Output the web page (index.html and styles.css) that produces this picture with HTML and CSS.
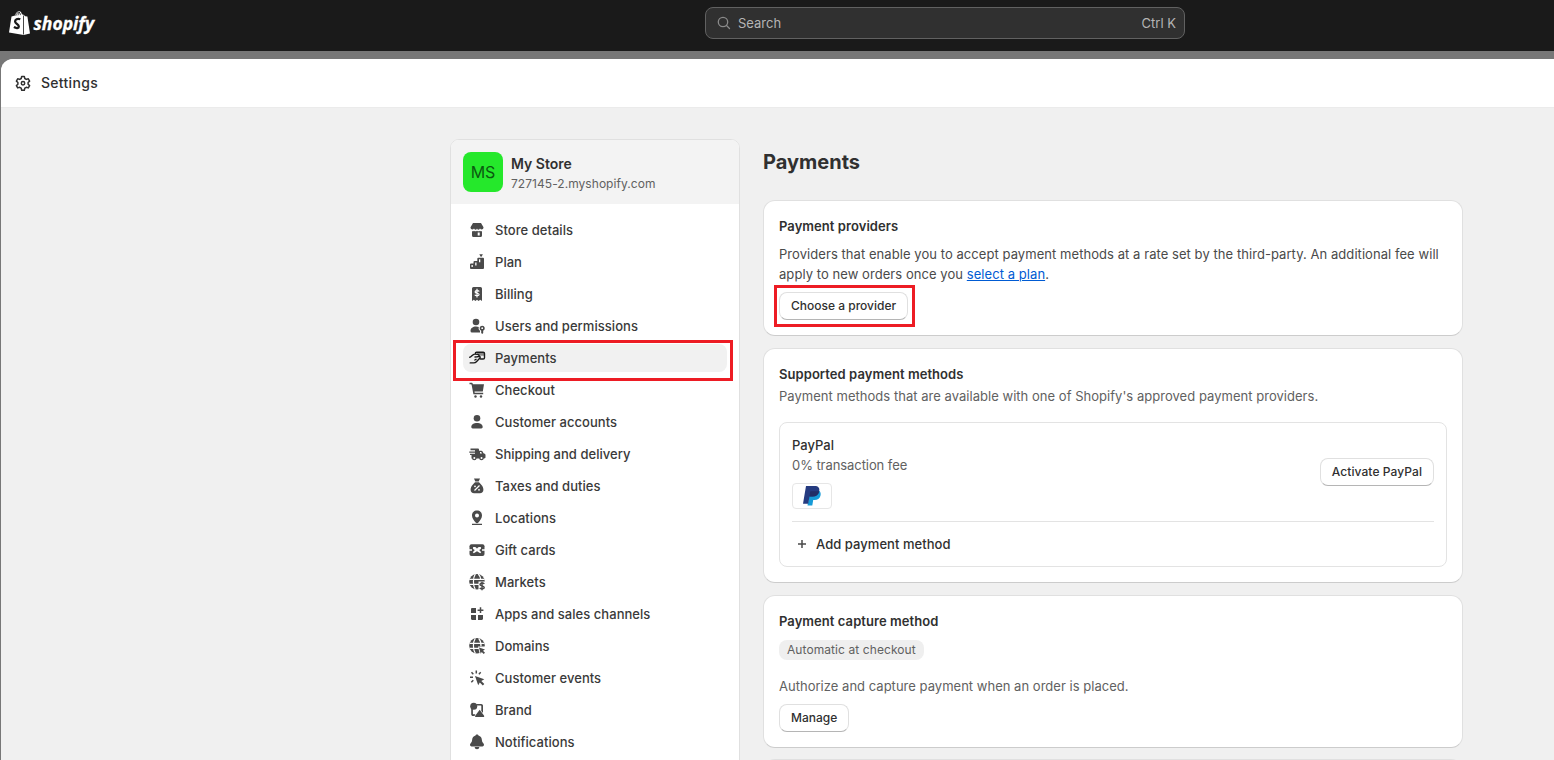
FILE: index.html
```html
<!DOCTYPE html>
<html lang="en">
<head>
    <meta charset="UTF-8">
    <meta name="viewport" content="width=device-width, initial-scale=1.0">
    <title>Settings - Payments</title>
    <link rel="stylesheet" href="styles.css">
</head>
<body>
    <header class="topbar">
        <svg class="logo" width="100" height="34" viewBox="0 0 100 34">
            <path d="M3.500 7.600 7 6.500C7.700 4 9.300 2.300 11.200 2.300c1.500 0 2.300 1.200 2.700 3l1.600.4 1.800 1.600 2.100.3L22 24.600l-6.300 1.300L1 23.500z" fill="#fff"/>
            <path d="M7.800 6.800c.4-2 1.700-3.500 3.100-3.500.9 0 1.400 1.300 1.500 2.800M10 6.300c.3-1.500 1-2.600 2-3" fill="none" stroke="#1a1a1a" stroke-width=".8"/>
            <path d="M12.300 10.300C9.500 9 6.900 10.500 7.100 12.700c.2 2.200 3.700 2.500 3.700 4.700 0 2-2.500 2.200-4.900.7" fill="none" stroke="#1a1a1a" stroke-width="2.300"/>
            <path d="M15.500 6.500v19" stroke="#1a1a1a" stroke-width=".8"/>
            <text class="wordmark" x="25.500" y="20.500" textLength="60.500" lengthAdjust="spacingAndGlyphs">shopify</text>
        </svg>
        <div class="search">
            <svg width="14" height="14" viewBox="0 0 14 14" fill="none" stroke="#8a8a8a" stroke-width="1.300" stroke-linecap="round">
                <circle cx="6" cy="6" r="4.700"/><path d="m9.500 9.500 3 3"/>
            </svg>
            <span>Search</span>
            <span class="shortcut">Ctrl K</span>
        </div>
    </header>

    <div class="backdrop">
        <div class="modal">
            <div class="modal-header">
                <svg width="20" height="20" viewBox="0 0 20 20" fill="none" stroke="#303030" stroke-width="1.500" stroke-linejoin="round">
                    <path d="M8.700 3.500h2.600l.5 2 1.500.9 2-.6 1.300 2.300-1.500 1.400v1.700l1.500 1.400-1.300 2.300-2-.6-1.500.9-.5 2H8.700l-.5-2-1.500-.9-2 .6-1.300-2.300 1.500-1.400V9.500L3.400 8.100l1.300-2.300 2 .6 1.500-.9z"/>
                    <circle cx="10" cy="10.300" r="1.700"/>
                </svg>
                <span>Settings</span>
            </div>

            <div class="content">
                <aside class="sidebar">
                    <div class="store">
                        <div class="avatar">MS</div>
                        <div>
                            <div class="store-name">My Store</div>
                            <div class="store-url">727145-2.myshopify.com</div>
                        </div>
                    </div>
                    <nav class="nav">
                        <a class="nav-item">
                            <svg class="icon" viewBox="0 0 20 20">
                                <path d="M6 3h8l2.500 4.200c0 2.300-2.400 3-3.500 1.300-1 1.700-2.400 1.700-3 0-.6 1.700-2 1.700-3 0C5.900 10.200 3.500 9.500 3.500 7.200z"/>
                                <path d="M5 11.200c1 .2 1.500 0 2-.5 1 .8 2 .8 3 0 1 .8 2 .8 3 0 .5.500 1 .7 2 .5V15.500a1.500 1.500 0 0 1-1.500 1.500h-7A1.500 1.500 0 0 1 5 15.500z"/>
                                <path class="cut" d="M10.700 12.500h2v3h-2z"/>
                            </svg>
                            <span>Store details</span>
                        </a>
                        <a class="nav-item">
                            <svg class="icon" viewBox="0 0 20 20">
                                <path d="M3 12.500a1 1 0 0 1 1-1h2.500V10a1 1 0 0 1 1-1h2.800V6.700a1 1 0 0 1 1-1H16a1 1 0 0 1 1 1V16a1 1 0 0 1-1 1H4a1 1 0 0 1-1-1zM12.300 2.200h3.600L14.500 4.700h-.8z"/>
                                <path class="cut" d="M4.500 13h1.300v2H4.500zM8.200 10.500h1.300v3H8.200zM12 7.300h1.300v3H12z"/>
                            </svg>
                            <span>Plan</span>
                        </a>
                        <a class="nav-item">
                            <svg class="icon" viewBox="0 0 20 20">
                                <path d="M5 4.500A1.500 1.500 0 0 1 6.500 3h7A1.500 1.500 0 0 1 15 4.500V17l-1.800-1.200-1.600 1.200L10 15.800 8.400 17l-1.600-1.200L5 17z"/>
                                <path class="cut-line" d="M12.200 7.500c-.7-1.400-4.100-1.200-4.100.5 0 1.700 4 .8 4 2.500 0 1.500-3.600 1.600-4.300.2M10 4.700v8.700"/>
                            </svg>
                            <span>Billing</span>
                        </a>
                        <a class="nav-item">
                            <svg class="icon" viewBox="0 0 20 20">
                                <circle cx="9" cy="6" r="3.300"/>
                                <path d="M3.500 15c0-3 2.500-4.500 5.500-4.500 1.200 0 2 .2 2.800.6-.5 1.700 0 3 1.200 3.700v1.700H5A1.500 1.500 0 0 1 3.500 15z"/>
                                <path fill-rule="evenodd" d="M15.200 9.700a2.600 2.600 0 0 1 1 5V17l-1 1-1-1v-2.300a2.600 2.600 0 0 1 1-5zm0 1.600a.9.9 0 1 0 0 1.800.9.9 0 0 0 0-1.800z"/>
                            </svg>
                            <span>Users and permissions</span>
                        </a>
                        <a class="nav-item active">
                            <svg class="icon" viewBox="0 0 20 20">
                                <path d="M8.500 4.500h8.700v3.200H13z"/>
                                <path class="line" d="M8.300 5.500c0-.8.500-1.300 1.300-1.300h6.600c.8 0 1.300.5 1.300 1.300v4.200c0 .8-.5 1.300-1.300 1.300h-2.700M2.700 9.300c1.700 0 2.800-3.200 5-3.200 1.800 0 4.500.2 4.500 1.300 0 1-1.500 1.500-4.200 1.600M12 8.200c1.300.3 1.600 1.200.7 2.100l-3.300 3.500c-.8.900-1.500 1.100-2.700 1.100H3.200M9 11.300l-1.200.7"/>
                            </svg>
                            <span>Payments</span>
                        </a>
                        <a class="nav-item">
                            <svg class="icon" viewBox="0 0 20 20">
                                <path d="M2.500 2.800h1.700c.9 0 1.500.5 1.700 1.400H17l-1.200 7.300H7.500l.2 1.300h8.500v1.400H6.400L4.600 4.700c0-.3-.3-.5-.6-.5H2.500z"/>
                                <circle cx="8.500" cy="16.500" r="1.200"/><circle cx="14" cy="16.500" r="1.200"/>
                            </svg>
                            <span>Checkout</span>
                        </a>
                        <a class="nav-item">
                            <svg class="icon" viewBox="0 0 20 20">
                                <circle cx="10" cy="6.300" r="3.300"/>
                                <path d="M4.300 15c0-2.800 2.700-4 5.700-4s5.700 1.200 5.700 4c0 .8-.6 1.400-1.400 1.400H5.700c-.8 0-1.400-.6-1.400-1.400z"/>
                            </svg>
                            <span>Customer accounts</span>
                        </a>
                        <a class="nav-item">
                            <svg class="icon" viewBox="0 0 20 20">
                                <path d="M3.500 4.500H11a1 1 0 0 1 1 1v1.200h2.300c.6 0 1 .3 1.300.8l.9 1.700 1.200.6c.5.200.8.7.8 1.200v2.200c0 .7-.5 1.200-1.300 1.200H4.500V11H3V9.800h5V8.700H2.300V7.400H8V6.200H3.500z"/>
                                <circle cx="7.300" cy="14" r="2.300"/><circle cx="14.500" cy="14" r="2.300"/>
                                <circle class="cut" cx="7.300" cy="14" r="1"/><circle class="cut" cx="14.500" cy="14" r="1"/>
                                <path class="cut" d="M13 8h1.200l.8 1.600h-2z"/>
                            </svg>
                            <span>Shipping and delivery</span>
                        </a>
                        <a class="nav-item">
                            <svg class="icon" viewBox="0 0 20 20">
                                <path d="M7 2.500h6l-1.300 3H8.300zM8 6.300h4c.7 1 1.600 1.600 2.500 2.700 1.200 1.400 1.900 3 1.900 4.700 0 2.200-1.400 3.500-3.500 3.500H7.100c-2.100 0-3.500-1.300-3.500-3.500 0-1.700.7-3.300 1.900-4.700C6.400 7.900 7.300 7.300 8 6.300z"/>
                                <path class="cut-line" d="m7.500 14.500 5-5"/>
                                <circle class="cut" cx="8" cy="10.300" r=".9"/><circle class="cut" cx="12" cy="13.800" r=".9"/>
                            </svg>
                            <span>Taxes and duties</span>
                        </a>
                        <a class="nav-item">
                            <svg class="icon" viewBox="0 0 20 20">
                                <path fill-rule="evenodd" d="M10 2.500c3 0 5 2.100 5 4.900 0 2.900-2 4.600-3.600 7.200-.6 1-2.200 1-2.800 0C7 12 5 10.300 5 7.400c0-2.800 2-4.900 5-4.900zm0 3a2 2 0 1 0 0 4 2 2 0 0 0 0-4zM5 15.700h10V17H5z"/>
                            </svg>
                            <span>Locations</span>
                        </a>
                        <a class="nav-item">
                            <svg class="icon" viewBox="0 0 20 20">
                                <rect x="2.500" y="4.300" width="15" height="11.700" rx="2"/>
                                <path class="cut" d="M2 9.300h3v1.500H2zM15 9.300h3v1.500h-3zM6 7.200c2-.5 3.300 0 4 1.500.7-1.500 2-2 4-1.500.3 1.300-.3 2.300-1.800 2.800l2 2.300-1 1L10 11.300l-3.200 2-1-1 2-2.300C6.300 9.500 5.700 8.500 6 7.200z"/>
                            </svg>
                            <span>Gift cards</span>
                        </a>
                        <a class="nav-item">
                            <svg class="icon" viewBox="0 0 20 20">
                                <circle cx="10" cy="9.800" r="7.800"/>
                                <path class="cut-line" d="M2.200 7.300h15.500M2.200 12.300h10M8.300 2c-2.500 4-2.500 11.500 0 15.500M11.300 2c1.700 1.800 2.300 3.500 2.500 5.500"/>
                                <path class="cut" d="M11.500 9.500H18.500V19h-7z"/>
                                <path class="glyph" d="M17.200 12c-.8-1.500-4.200-1.200-4.200.4 0 1.900 4.200 1.100 4.200 3.100 0 1.600-3.500 1.800-4.400.3M15 9.800v8.400"/>
                            </svg>
                            <span>Markets</span>
                        </a>
                        <a class="nav-item">
                            <svg class="icon" viewBox="0 0 20 20">
                                <path d="M5.200 4H9v5H4V5.200C4 4.500 4.500 4 5.200 4zM4 11h5v5H5.200C4.500 16 4 15.500 4 14.800zM11 11h5v3.800c0 .7-.5 1.200-1.200 1.200H11z"/>
                                <path class="glyph" d="M13.500 3.300v5.800M10.600 6.200h5.800"/>
                            </svg>
                            <span>Apps and sales channels</span>
                        </a>
                        <a class="nav-item">
                            <svg class="icon" viewBox="0 0 20 20">
                                <circle cx="10" cy="9.800" r="7.800"/>
                                <path class="cut-line" d="M2.500 7.300h15M2.500 12.300h15M8.300 2.300c-2.500 4-2.500 11 0 15M11.700 2.300c2 2.500 2.500 5 2.300 8"/>
                                <path class="cut" d="M11 10.500H19V19h-6z"/>
                                <path d="m12 11.500 6 2-2 1.200 2 2-1.300 1.300-2-2-1 1.700z"/>
                            </svg>
                            <span>Domains</span>
                        </a>
                        <a class="nav-item">
                            <svg class="icon" viewBox="0 0 20 20">
                                <path d="m8 8 9.300 3.300-3 1.700 3 3-1.500 1.500-3-3-1.600 2.800z"/>
                                <path class="glyph" d="M9.300 2.500v3M4.500 4.300 6.300 6.200M3 9.300h3M4.300 14.300 6.300 12.300M13.700 4.300l-1.800 1.900"/>
                            </svg>
                            <span>Customer events</span>
                        </a>
                        <a class="nav-item">
                            <svg class="icon" viewBox="0 0 20 20">
                                <circle cx="6.700" cy="6.200" r="3.500"/>
                                <path fill-rule="evenodd" d="M9 4h5.200c1 0 1.800.8 1.800 1.800V13l-1.700-2V6c0-.3-.2-.5-.5-.5h-3.700zM4.200 8.500h1.700v5.300c0 .3.200.5.500.5h2L7.500 16H6c-1 0-1.800-.8-1.800-1.800z"/>
                                <path d="m12.700 9.700 4.400 6c.3.600 0 1.400-.7 1.400H8.900c-.7 0-1-.8-.7-1.400z"/>
                            </svg>
                            <span>Brand</span>
                        </a>
                        <a class="nav-item">
                            <svg class="icon" viewBox="0 0 20 20">
                                <path d="M10 2.500c.8 0 1.400.4 1.500 1.100 2.100.6 3.200 2.200 3.400 4.400.1 1.800.8 2.700 1.600 3.500.9 1 .6 2.900-1 2.900h-11c-1.600 0-1.900-1.900-1-2.900.8-.8 1.500-1.700 1.600-3.500.2-2.200 1.300-3.800 3.400-4.400.1-.7.700-1.100 1.500-1.100zM7.700 15h4.600c0 1.300-1 2.300-2.300 2.300s-2.300-1-2.300-2.300z"/>
                            </svg>
                            <span>Notifications</span>
                        </a>
                    </nav>
                </aside>

                <main class="main">
                    <h1>Payments</h1>

                    <section class="card">
                        <h2>Payment providers</h2>
                        <p class="providers-text">Providers that enable you to accept payment methods at a rate set by the third-party. An additional fee will apply to new orders once you <a class="link">select a plan</a>.</p>
                        <button class="btn highlighted">Choose a provider</button>
                    </section>

                    <section class="card">
                        <h2>Supported payment methods</h2>
                        <p class="methods-text">Payment methods that are available with one of Shopify's approved payment providers.</p>
                        <div class="methods">
                            <div class="method">
                                <div>
                                    <div class="method-name">PayPal</div>
                                    <div class="method-fee">0% transaction fee</div>
                                    <div class="method-logo">
                                        <svg width="20" height="22" viewBox="0 0 20 22">
                                            <path d="M8 6h9.500c1.200 1.200 1.500 3 .9 5-.8 2.900-2.900 4-5.900 4h-1.300l-.9 5.500H5.500z" fill="#179bd7"/>
                                            <path d="M4 1h8.500c3.900 0 5.500 2 4.700 5.400-.8 3.500-3.100 5-6.600 5H7.500L6.200 18.800H1z" fill="#253b80"/>
                                            <path d="M8.300 6.200h8.900c-.7 3.600-3 5.200-6.600 5.200H7.500z" fill="#222d65"/>
                                        </svg>
                                    </div>
                                </div>
                                <button class="btn activate">Activate PayPal</button>
                            </div>
                            <div class="add-method">
                                <svg width="20" height="20" viewBox="0 0 20 20" stroke="#4a4a4a" stroke-width="1.500"><path d="M10 6v8M6 10h8"/></svg>
                                <span>Add payment method</span>
                            </div>
                        </div>
                    </section>

                    <section class="card capture">
                        <h2>Payment capture method</h2>
                        <span class="badge">Automatic at checkout</span>
                        <p class="capture-text">Authorize and capture payment when an order is placed.</p>
                        <button class="btn">Manage</button>
                    </section>

                    <section class="card"></section>
                </main>
            </div>
        </div>
    </div>
</body>
</html>
```
FILE: styles.css
```css
* {
    box-sizing: border-box;
}

body {
    margin: 0;
    height: 760px;
    overflow: hidden;
    font-family: Inter, "Liberation Sans", sans-serif;
    font-size: 13px;
    line-height: 20px;
    color: #303030;
    background-color: #777;
}

h1, h2, p {
    margin: 0;
}

.topbar {
    display: grid;
    grid-template-columns: 705px 480px;
    height: 51px;
    padding-top: 7px;
    background-color: #1a1a1a;
}

.logo {
    margin-left: 8px;
    margin-top: 2px;
}

.wordmark {
    font-family: "Open Sans", sans-serif;
    font-size: 18px;
    font-weight: 700;
    font-style: italic;
    fill: #fff;
    stroke: #fff;
    stroke-width: 0.3px;
}

.search {
    display: flex;
    align-items: center;
    gap: 7px;
    height: 32px;
    padding: 0 8px 0 11px;
    border: 1px solid #616161;
    border-radius: 8px;
    background-color: #303030;
    color: #b5b5b5;
}

.shortcut {
    margin-left: auto;
}

.backdrop {
    padding: 8px 0 0 1px;
}

.modal {
    height: 701px;
    overflow: hidden;
    border-top-left-radius: 12px;
    background-color: #f0f0f0;
}

.modal-header {
    display: flex;
    align-items: center;
    gap: 8px;
    height: 49px;
    padding-left: 12px;
    border-bottom: 1px solid #ebebeb;
    background-color: #fff;
    font-size: 14px;
    font-weight: 500;
    letter-spacing: 0.3px;
}

.content {
    display: flex;
    gap: 23px;
    padding: 31px 0 0 449px;
}

.sidebar {
    flex: none;
    width: 290px;
    height: 700px;
    border: 1px solid #e0e0e0;
    border-radius: 9px;
    background-color: #fff;
}

.store {
    display: flex;
    gap: 8px;
    height: 64px;
    padding: 12px;
    border-radius: 8px 8px 0 0;
    background-color: #f3f3f3;
}

.avatar {
    width: 40px;
    height: 40px;
    border-radius: 8px;
    background-color: #25e82b;
    color: #0b5a10;
    font-size: 16px;
    line-height: 40px;
    text-align: center;
}

.store-name {
    margin-top: 2px;
    font-size: 14px;
    font-weight: 600;
}

.store-url {
    font-size: 12px;
    letter-spacing: 0.05px;
    color: #616161;
}

.nav {
    display: flex;
    flex-direction: column;
    gap: 4px;
    padding: 12px;
}

.nav-item {
    display: flex;
    align-items: center;
    gap: 8px;
    height: 28px;
    padding-left: 4px;
    border-radius: 8px;
    font-weight: 500;
    letter-spacing: 0.04px;
    color: #3a3a3a;
}

.nav-item.active {
    position: relative;
    background-color: #f1f1f1;
}

.nav-item.active::after,
.highlighted::after {
    content: "";
    position: absolute;
    border: 3px solid #ed1c24;
    pointer-events: none;
}

.nav-item.active::after {
    top: -4px;
    right: -6px;
    bottom: -9px;
    left: -10px;
}

.icon {
    width: 20px;
    height: 20px;
    fill: #4a4a4a;
}

.icon .cut {
    fill: #fff;
}

.icon .cut-line {
    fill: none;
    stroke: #fff;
    stroke-width: 1.2;
}

.icon .glyph {
    fill: none;
    stroke: #4a4a4a;
    stroke-width: 1.5;
}

.active .icon {
    fill: #888;
}

.icon .line {
    fill: none;
    stroke: #1a1a1a;
    stroke-width: 1.4;
    stroke-linecap: round;
    stroke-linejoin: round;
}

.main {
    width: 700px;
}

h1 {
    height: 61px;
    padding-top: 13px;
    font-size: 20px;
    font-weight: 650;
}

h2 {
    font-size: 13px;
    font-weight: 600;
    letter-spacing: 0.06px;
}

.card {
    margin-bottom: 12px;
    padding: 15px;
    border: 1px solid #e0e0e0;
    border-bottom-color: #ccc;
    border-radius: 12px;
    background-color: #fff;
}

.card.capture {
    margin-bottom: 11px;
}

.providers-text {
    margin: 8px 0;
    letter-spacing: 0.06px;
    color: #4a4a4a;
}

.link {
    color: #005bd3;
    text-decoration: underline;
}

.btn {
    display: block;
    height: 28px;
    padding: 0 11px 2px;
    border: 1px solid #e0e0e0;
    border-bottom-color: #b5b5b5;
    border-radius: 8px;
    background-color: #fff;
    color: #303030;
    font-family: inherit;
    font-size: 12px;
    font-weight: 500;
}

.btn.activate {
    letter-spacing: 0.08px;
}

.highlighted {
    position: relative;
}

.highlighted::after {
    top: -8px;
    right: -8px;
    bottom: -8px;
    left: -6px;
}

.methods-text,
.method-fee,
.capture-text {
    color: #616161;
}

.method-fee {
    letter-spacing: -0.07px;
}

.methods-text {
    margin-top: 2px;
    letter-spacing: 0.03px;
}

.methods {
    margin-top: 16px;
    padding: 12px 12px 0;
    border: 1px solid #e3e3e3;
    border-radius: 8px;
}

.method {
    display: flex;
    align-items: center;
    justify-content: space-between;
    height: 87px;
    padding-bottom: 12px;
    border-bottom: 1px solid #e3e3e3;
}

.method-name {
    font-weight: 500;
}

.method-logo {
    display: flex;
    align-items: center;
    justify-content: center;
    width: 40px;
    height: 26px;
    margin-top: 8px;
    border: 1px solid #e6e6e6;
    border-radius: 4px;
}

.add-method {
    display: flex;
    align-items: center;
    gap: 4px;
    height: 44px;
    font-weight: 500;
    letter-spacing: 0.05px;
}

.badge {
    display: block;
    width: fit-content;
    margin-top: 9px;
    padding: 0 8px;
    border-radius: 8px;
    background-color: #efefef;
    color: #616161;
    font-size: 12px;
    letter-spacing: 0.08px;
}

.capture-text {
    margin: 16px 0 8px;
    letter-spacing: 0.02px;
}
```
